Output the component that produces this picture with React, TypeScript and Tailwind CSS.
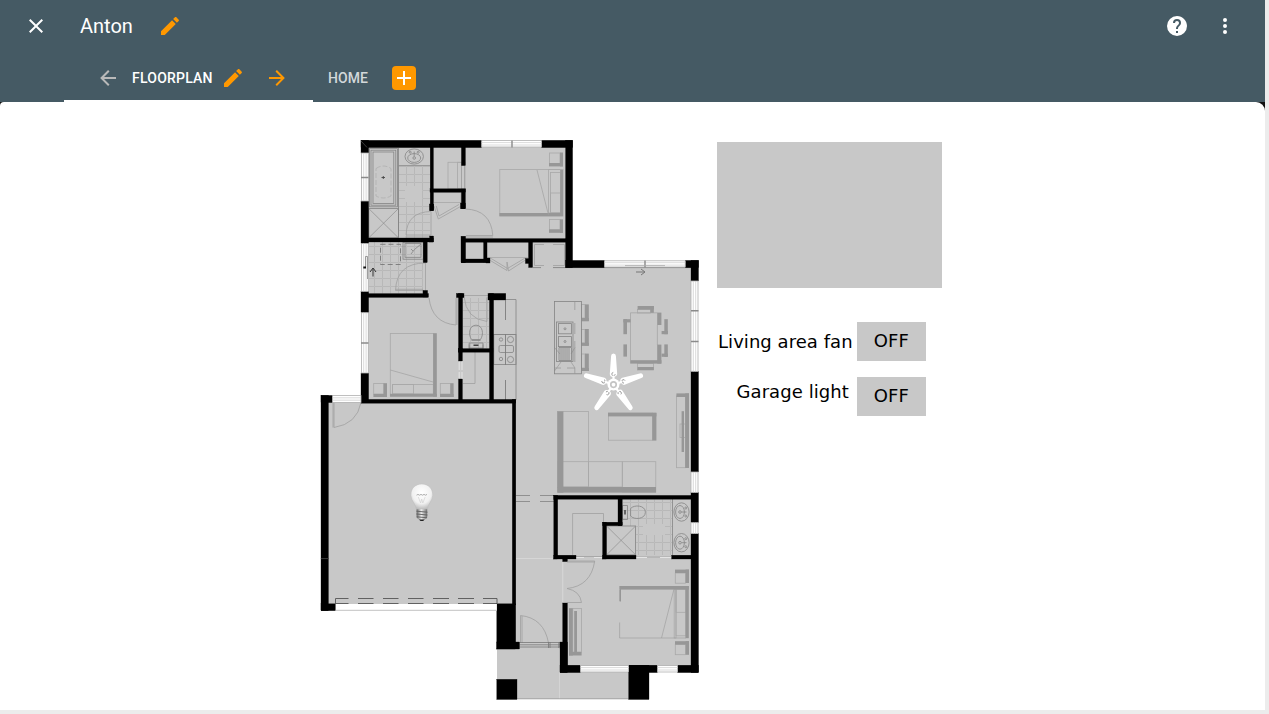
import React from "react";

const ICONS = {
  close: "M19,6.41L17.59,5L12,10.59L6.41,5L5,6.41L10.59,12L5,17.59L6.41,19L12,13.41L17.59,19L19,17.59L13.41,12L19,6.41Z",
  pencil:
    "M20.71,7.04C21.1,6.65 21.1,6 20.71,5.63L18.37,3.29C18,2.9 17.35,2.9 16.96,3.29L15.12,5.12L18.87,8.87M3,17.25V21H6.75L17.81,9.93L14.06,6.18L3,17.25Z",
  left: "M20,11V13H8L13.5,18.5L12.08,19.92L4.16,12L12.08,4.08L13.5,5.5L8,11H20Z",
  right: "M4,11V13H16L10.5,18.5L11.92,19.92L19.84,12L11.92,4.08L10.5,5.5L16,11H4Z",
  plus: "M19,13H13V19H11V13H5V11H11V5H13V11H19V13Z",
  help: "M15.07,11.25L14.17,12.17C13.45,12.89 13,13.5 13,15H11V14.5C11,13.39 11.45,12.39 12.17,11.67L13.41,10.41C13.78,10.05 14,9.55 14,9C14,7.89 13.1,7 12,7A2,2 0 0,0 10,9H8A4,4 0 0,1 12,5A4,4 0 0,1 16,9C16,9.88 15.64,10.67 15.07,11.25M13,19H11V17H13M12,2A10,10 0 0,0 2,12A10,10 0 0,0 12,22A10,10 0 0,0 22,12C22,6.47 17.5,2 12,2Z",
  dots: "M12,16A2,2 0 0,1 14,18A2,2 0 0,1 12,20A2,2 0 0,1 10,18A2,2 0 0,1 12,16M12,10A2,2 0 0,1 14,12A2,2 0 0,1 12,14A2,2 0 0,1 10,12A2,2 0 0,1 12,10M12,4A2,2 0 0,1 14,6A2,2 0 0,1 12,8A2,2 0 0,1 10,6A2,2 0 0,1 12,4Z",
};

function Icon({ name, className = "" }: { name: keyof typeof ICONS; className?: string }) {
  return (
    <svg viewBox="0 0 24 24" className={`size-6 shrink-0 fill-current ${className}`}>
      <path d={ICONS[name]} />
    </svg>
  );
}

type Box = [number, number, number, number];

// Boxes are given as left, top, right, bottom.
const WALLS: Box[] = [
  [361, 140.3, 481.7, 147.6], [541.5, 140.3, 572.6, 147.6], [565.6, 140.3, 572.6, 267.7],
  [565.6, 260.4, 604.6, 267.7], [685.2, 260.4, 698.5, 267.7], [691, 260.4, 698.5, 281],
  [691, 371.3, 698.5, 472], [691, 492.4, 698.5, 522.7], [691, 533.5, 698.5, 672.6],
  [677.5, 665.2, 698.5, 672.6], [628.6, 665.2, 657.6, 672.6], [628.6, 665.2, 649, 699.5],
  [560, 665.2, 580.6, 672.6], [562.7, 603, 567.4, 672], [560, 642, 567.4, 672.6],
  [496.8, 603.8, 515.7, 649], [496.8, 642, 519.5, 649], [496.8, 679.3, 517, 699.5],
  [361, 140.3, 368.6, 153], [361, 201, 368.6, 243.6], [361, 291.3, 368.6, 312.7],
  [361, 373, 368.6, 402.6], [321, 395.4, 328.4, 610.7], [321, 395.4, 332.6, 402.6],
  [321, 603.8, 335.7, 610.7], [512.3, 399.4, 515.8, 605], [361, 399.4, 515.8, 403.2],
  [430.2, 147, 433.4, 210.7], [429.4, 204, 433.8, 210.7], [430, 188.8, 465.4, 192.2],
  [461.4, 147, 465.4, 165.6], [461.4, 189, 465.4, 208.8], [460.4, 203, 465.4, 208.8],
  [368, 238, 433.3, 242], [429.6, 236, 433.6, 242], [461.4, 238.6, 566, 242.2],
  [461, 236.2, 465.6, 262.8], [461.4, 259, 489.6, 262.8], [483.6, 242, 487, 262],
  [486, 258, 490, 263], [528.6, 242, 532.6, 267.5], [525.4, 258.5, 530, 263.5],
  [423.2, 241, 427.2, 262.6], [368, 293.6, 428.5, 297.4], [423, 290.4, 427.6, 297],
  [458.5, 293.4, 462.6, 352], [456.4, 293.4, 464, 297.6], [458.5, 348.6, 493, 352.2],
  [458.5, 348.6, 462.4, 361], [489.5, 293.4, 493.6, 401], [488, 293.4, 505.8, 300],
  [458.5, 379, 462.4, 401],
  [553.8, 495.4, 691, 499.2], [553.8, 495.4, 557.7, 559], [553.8, 555.2, 576, 559],
  [562.7, 559, 567.4, 561.6], [618, 499, 622.2, 525.7], [602.6, 522.2, 622.2, 525.7],
  [602.6, 522.2, 606.4, 559], [602.6, 555.2, 636, 559], [671.7, 555.2, 691, 559],
];

const WINDOWS: Box[] = [
  [481.7, 140.6, 541.5, 147], [604.6, 260.8, 685.2, 267], [691, 281, 698, 371.3],
  [691, 472, 698, 492.4], [691, 522.7, 698, 533.5], [657.6, 665.6, 677.5, 672],
  [580.6, 665.6, 628.6, 672], [361.5, 153, 368.3, 201], [361.5, 243.6, 368.3, 291.3],
  [361.5, 312.7, 368.3, 373], [332.6, 395.6, 361, 402.4],
];

// Darker shadow edges of the furniture.
const SHADES: Box[] = [
  [549, 163, 563, 166.4], [560, 152.5, 563, 166.4], [499.4, 213, 563, 216.2], [560.2, 170, 563, 216],
  [549, 229.4, 563, 232.8], [560, 219.3, 563, 232.8],
  [433.2, 333.2, 436.8, 396.7], [390, 393.8, 436.8, 396.7], [373.4, 394, 387, 397], [383.6, 383.2, 387, 397],
  [440, 394, 453.6, 397], [450.4, 383.2, 453.6, 397],
  [585, 304.4, 588.8, 321], [581.6, 318, 588.8, 321.3], [585, 329, 588.8, 345.6], [581.6, 342.8, 588.8, 345.9],
  [585, 353.6, 588.8, 371], [581.6, 368, 588.8, 371],
  [637.6, 306, 653.8, 309.6], [650.4, 306, 653.8, 312.8], [657.2, 312.6, 661.4, 325], [630.2, 360.2, 661.4, 363.6],
  [657.2, 344.6, 661.4, 363.6], [623.4, 319.2, 630.6, 322.4], [623.4, 319.2, 627, 334.2],
  [664.3, 319.2, 667.8, 334.2], [661.6, 331, 667.8, 334.2], [623.4, 344.4, 627, 356.6],
  [664.3, 344.4, 667.8, 356.8], [661.6, 353.6, 667.8, 356.8], [637.6, 367, 653.8, 370],
  [557.4, 411.4, 563.4, 492.6], [557.4, 487, 656, 492.6], [608, 412.8, 656.4, 416.4], [652.3, 412.8, 656.4, 440.6],
  [676.4, 393.4, 689, 397], [685.2, 393.4, 689, 468], [681.6, 411.2, 684, 452],
  [619.6, 586, 688.8, 589.6], [685.4, 586, 688.8, 638.2], [619.6, 586, 621, 601.5],
  [675, 569.6, 689, 573], [685.6, 569.6, 689, 583], [675, 641.2, 689, 644.6], [685.6, 641.2, 689, 654.8],
  [569, 608.2, 572.8, 655.5], [569, 652, 581.6, 655.5], [574.2, 611, 577, 652],
];

const OUTLINES: Box[] = [
  [549.5, 153, 560, 163.5], [499.8, 169.5, 563, 216], [548.5, 169.5, 561, 213], [550.5, 172.5, 560.5, 213],
  [550.5, 193, 560.5, 213], [549.5, 219.5, 560, 229.8], [390.3, 333.5, 433.5, 396], [392.5, 384.5, 433.3, 394],
  [392.5, 384.5, 413.5, 394], [373.7, 383.5, 383.8, 394], [440.3, 383.5, 450.5, 394],
  [581.6, 304.5, 585, 318], [581.6, 329.5, 585, 343], [581.6, 354, 585, 368],
  [637.6, 309.4, 650.5, 313], [637.6, 363.5, 653.5, 370],
  [557.6, 411.5, 588.6, 487], [557.6, 461.7, 588.6, 487], [588.6, 461.7, 622.3, 487], [622.3, 461.7, 655.8, 492],
  [608.4, 413, 652.4, 440.2], [676.5, 396, 685.5, 467.7], [680, 424, 685.5, 437.5],
  [675.3, 573, 685.6, 583.2], [675.3, 644.5, 685.6, 654.7], [676, 589, 686, 635.8], [674.2, 589, 676, 638],
  [676, 589, 686, 612.3], [572.8, 608.6, 581.5, 652],
  [448, 162.3, 465, 189], [457.5, 162.3, 461.5, 188.5], [433.5, 192.5, 461, 202.5], [487, 242.5, 528.5, 257.5],
];

const FINE_BOXES: Box[] = [
  [369.5, 148.6, 397.4, 206.8], [371, 150.2, 395.8, 205.2], [373, 152, 393.8, 203.4],
  [368.8, 208.6, 398.4, 237.8], [403, 242.3, 423.5, 259.2], [405, 243.6, 421, 257.3],
  [606.6, 526, 635.6, 554.8], [554.4, 301.5, 581.4, 373.8],
  [556.4, 322, 573, 361.5], [558.4, 323.6, 571.5, 333.8], [558.4, 336.6, 571.5, 346.6],
  [493.8, 334.5, 516, 364.5],
];

function rects(boxes: Box[]) {
  return boxes.map(([l, t, r, b], i) => <rect key={i} x={l} y={t} width={r - l} height={b - t} />);
}

function Basin({ x, y, turn = 0 }: { x: number; y: number; turn?: number }) {
  return (
    <g transform={`translate(${x} ${y}) rotate(${turn})`}>
      <ellipse rx="9.2" ry="7.6" />
      <ellipse rx="6.5" ry="4.4" cy="1.5" />
      <circle r="1.3" cy="1.5" />
      <circle r="1" cx="-4" cy="-4.3" />
      <circle r="1" cx="4" cy="-4.3" />
      <path d="M0-5V0" />
    </g>
  );
}

function Window({ box }: { box: Box }) {
  const [l, t, r, b] = box;
  const flat = r - l > b - t;
  const cx = (l + r) / 2;
  const cy = (t + b) / 2;
  return (
    <g>
      <rect x={l} y={t} width={r - l} height={b - t} fill="#fff" stroke="#b0b0b0" strokeWidth=".8" />
      <path
        d={flat ? `M${l} ${cy - 1.2}H${r}M${l} ${cy + 1.2}H${r}` : `M${cx - 1.2} ${t}V${b}M${cx + 1.2} ${t}V${b}`}
        stroke="#d0d0d0"
        strokeWidth=".8"
      />
    </g>
  );
}

function Fan() {
  return (
    <g transform="translate(613.5 384.6)">
      {[0, 72, 144, 216, 288].map((a) => (
        <g key={a} transform={`rotate(${a})`}>
          <path d="M-2.4-28.5Q-2.4-31 0-31T2.4-28.5L3.7-10.5Q3.5-8 0-7.6T-3.7-10.5Z" fill="#fff" />
          <circle cy="-10.5" r="1.7" fill="none" stroke="#999" strokeWidth=".9" strokeDasharray="7 3" />
          <path d="M0-9V-4" stroke="#fff" strokeWidth="2.2" />
        </g>
      ))}
      <circle r="6" fill="#fff" />
      <circle r="2.7" fill="#fff" stroke="#c4c4c4" strokeWidth="1.7" />
    </g>
  );
}

function Bulb() {
  return (
    <g>
      <path
        d="M421.8 484C415 484 410.5 489 410.8 495.3C411.1 501.2 415.7 503.6 416.3 509.3H427.4C428 503.6 432.4 501.2 432.8 495.3C433 489 428.6 484 421.8 484Z"
        fill="url(#glass)"
        stroke="#bdbdbd"
        strokeWidth=".5"
      />
      <path d="M416.5 495.2l1.5-.8 1.5.8 1.5-.8 1.5.8 1.5-.8 1.5.8 1.5-.8" stroke="#a5a5a5" strokeWidth=".9" />
      <path d="M418.3 497l2.3 6 1.1-4 1.1 4 2.4-6" stroke="#d2d2d2" strokeWidth=".7" />
      <path d="M416.6 509.2H427.2V517.5L424 520.3Q421.8 521.8 419.6 520.3L416.6 517.5Z" fill="url(#cap)" />
      <path d="M416.4 511.2L427.5 512.2M416.4 514L427.5 515M416.8 516.8L427 517.8" stroke="#5d5d5d" strokeWidth=".9" />
      <path d="M419 519.5h5.6l-1.5 1.5h-2.6z" fill="#222" />
    </g>
  );
}

function FloorPlan() {
  return (
    <svg viewBox="320 139 380 562" className="h-[562px] w-[380px] shrink-0" fill="none">
      <defs>
        <radialGradient id="glass" cx=".5" cy=".35" r=".65">
          <stop offset="0" stopColor="#fff" />
          <stop offset=".65" stopColor="#f1f1f1" />
          <stop offset="1" stopColor="#bcbcbc" />
        </radialGradient>
        <linearGradient id="cap">
          <stop offset="0" stopColor="#656565" />
          <stop offset=".45" stopColor="#ededed" />
          <stop offset="1" stopColor="#707070" />
        </linearGradient>
        <pattern id="tiles" width="8" height="8" x="398" y="166" patternUnits="userSpaceOnUse">
          <path d="M8 .5H.5V8" stroke="#b7b7b7" strokeWidth=".9" />
        </pattern>
      </defs>
      <path
        d="M365 144H569V264H695V669H628.5V699H497V649H515V604H325V400H365Z"
        fill="#c8c8c8"
      />
      <path d="M398 166H430V238H398ZM368.6 242H423V293.5H368.6ZM463 298H489V348H463ZM622.4 499.4H672.5V555H636V526H622.4Z" fill="url(#tiles)" />
      <path d="M398.5 148H430V165.5H398.5ZM672.5 499.4H691V555H672.5ZM405 186H422V202H405ZM643 524H665V535H643Z" fill="#c8c8c8" />

      <g stroke="#a9a9a9" strokeWidth=".8">{rects(OUTLINES)}</g>
      <path d="M630.5 325V312.8H657.4M630.5 345V360.5M657.4 325V345M630.5 325V345" stroke="#a6a6a6" strokeWidth=".8" />
      <g fill="#979797">{rects(SHADES)}</g>

      <g stroke="#848484" strokeWidth=".8">
        {rects(FINE_BOXES)}
        <path d="M368.8 208.6L398.4 237.8M398.4 208.6L368.8 237.8M606.6 526L635.6 554.8M635.6 526L606.6 554.8" strokeWidth=".6" />
        <path d="M398.5 148V237M398.5 165.6H430M672.5 499V555M516 299.5V400M506 299.5H516M493.8 334.5H516" />
        <Basin x={414.2} y={156.5} />
        <Basin x={681.5} y={512} turn={90} />
        <Basin x={681.5} y={542.7} turn={90} />
        <circle cx="565" cy="328.8" r="1" />
        <circle cx="565" cy="341.5" r="1" />
        <path d="M559 347.5V360.5H571.5V347.5ZM561 348V360M563 348V360M565 348V360M567 348V360M569 348V360" />
        <path d="M554.5 347.5L560 354M554.5 371L561 362M575 347.5L571 354M575 368L571 362" strokeWidth=".5" />
        <circle cx="501" cy="339.5" r="1.7" />
        <circle cx="510.5" cy="339.5" r="3.1" />
        <circle cx="501" cy="359" r="1.7" />
        <circle cx="510.5" cy="359.5" r="3.1" />
        <rect x="499" y="345.5" width="14.5" height="7" rx="1.4" />
        <path d="M471.5 339.5C467.8 334 469.4 325.2 476 325.2S484.2 334 480.5 339.5ZM471.5 340.5H480.5M469.2 344.5V349M483 344.5V349M469.2 343H483V348H469.2Z" />
        <path d="M630.6 508.5C634 504.5 645.4 505 645.4 512.2S634 520 630.6 516ZM622.5 505.5H627.5V519.5H622.5Z" />
        <path d="M473.5 345.2H478.5M625 510V514.5" stroke="#444" strokeWidth="1.5" />
        <path d="M411 254L414.5 249.5L421 244M411 249l2 2" />
      </g>

      <g stroke="#a0a0a0" strokeWidth=".8">
        <path d="M376 168.5Q383.4 163.5 391 168.5V196Q383.4 200 376 196Z" strokeDasharray="5 2" strokeWidth=".5" />
        <path d="M537 170L548.5 215M390.3 370L433 382M674 589L661.5 638M619.6 622.5V638H686M619.6 601V590" strokeWidth=".7" />
        <path d="M431 211.5Q407 212 406 235H431V211.5M405.5 237H431" />
        <path d="M465.5 209Q491 210 492.8 235.5H466M465.5 237H493" />
        <path d="M434 206L438.3 219L460.5 206.5M436.3 206L439 216L459 204.5" />
        <path d="M489.5 260L507 270.5V262L508.5 271L525.5 260M490 257.8L507.5 268.5L525.5 257.8" />
        <path d="M425.5 263Q396.5 263 395.5 290.5H423M425.5 262.5V292M395.5 289.3H423" />
        <path d="M429 298Q432 323 456 325V298M457 298V325" />
        <path d="M464 296.5Q466 319 487 321.5V297M464 295.5H488" />
        <path d="M475 352V383.5H463M461.5 166V189M464.5 166V189" />
        <path d="M334 403V427.5Q357 424 361 402.5M333 403V427.5" />
        <path d="M572.6 555V513.5H603.5V555M576 556.5H602.6M636 557H671.7" />
        <path d="M567 561H594.7Q591 586 567 588.5Q580 591 581.5 602.5H567M567 562H594.7" />
        <path d="M520.5 643V615.5Q544 618 548.5 643M522 643V616" />
        <path d="M519.5 642.5H560V647H519.5M519.5 644.8H560M548.5 642V648M550 642V648M558.8 642V648" stroke="#777" />
        <path d="M516 495.5H530M540 495.5H554M516 501.5H530M540 501.5H554" stroke="#828282" />
        <path d="M534.5 244.5H544M553 244.5H564.5M534.5 244.5V265.5H544M553 265.5H564.5V244.5" />
        <path d="M532.6 267.6H541M553 267.6H691M320.8 558.5H328.5" stroke="#777" />
      </g>
      <path d="M459.2 361V370M462 361V370M459.2 372V379M462 372V379M576 557.5H584M594 557.5H602M636 557.5H647M660 557.5H671" stroke="#e4e4e4" strokeWidth="1" />

      <path d="M380.5 244.3H400.5V264.5H380.5Z" stroke="#777" strokeDasharray="5 3" strokeWidth=".9" />
      <path d="M383.3 176V179M381.5 177.5H385" stroke="#444" strokeWidth=".9" />
      <path d="M505.5 300V320M505.5 334V365M505.5 380V400" stroke="#7c7c7c" strokeWidth=".9" />
      <path d="M574.8 302V310M574.8 323V334M574.8 341V362M574.8 368V374M555 368H561M567 368H575" stroke="#999" strokeWidth=".8" />
      <path d="M373 276.5V268.5M370 272L373 268L376 272" stroke="#333" />
      <path d="M636 272H644.5M641 269L645 272L641 275" stroke="#777" />
      <path d="M515.8 558.5H554M559.4 649V699" stroke="#d9d9d9" strokeWidth=".8" />
      <path d="M562.8 562V603" stroke="#dcdcdc" strokeWidth=".8" />
      <path d="M517 698.8H628.5" stroke="#999" strokeWidth=".8" />

      <g fill="#000" stroke="#000" strokeWidth=".3">{rects(WALLS)}</g>
      <path d="M321 558.6H328M361 141L367 147.4" stroke="#777" strokeWidth=".5" />
      {WINDOWS.map((box, i) => (
        <Window key={i} box={box} />
      ))}
      <path d="M512 140.5V147.5M645 260.5V267.5M361 177.5H368.5M361 343H368.5M691 310.7H698.5M691 341.5H698.5" stroke="#8a8a8a" strokeWidth="1.4" />
      <path d="M625 265.6H645M645 265.6H665" stroke="#aaa" strokeWidth=".8" />
      <path d="M365.5 267.5V256.5H367.5V279" stroke="#777" strokeWidth=".7" />
      <path d="M363.3 267.5H366" stroke="#111" strokeWidth="2" />

      <path d="M335.7 604H496.8V610.5H335.7Z" fill="#fff" />
      <path d="M335.7 610.3H496.8" stroke="#c2c2c2" />
      <path d="M335.5 604V598.5H348.5M358 598.5H373.5M383 598.5H398.5M408 598.5H423.5M433 598.5H449M458 598.5H474M483 598.5H497V604M335.5 603.5H348.5M358 603.5H373.5M383 603.5H398.5M408 603.5H423.5M433 603.5H449M458 603.5H474M483 603.5H497" stroke="#555" strokeWidth=".9" />
      <Fan />
      <Bulb />
    </svg>
  );
}

function Toggle() {
  return (
    <button className="flex h-[39px] w-[68.5px] items-center justify-center bg-[#c8c8c8] pb-px text-[18px] leading-none tracking-[0.1px]">
      OFF
    </button>
  );
}

export default function App() {
  return (
    <div className="h-[714px] w-full overflow-hidden bg-[#ececec] font-['Roboto',sans-serif]">
      <div className="flex h-[710px] w-[1265px] flex-col bg-[#111]">
        <header className="h-[102px] shrink-0 bg-[#455a64] text-white">
          <div className="flex h-[52px] items-center pr-7 pl-6">
            <Icon name="close" />
            <h1 className="ml-8 w-[54px] pb-px text-xl leading-none font-normal">Anton</h1>
            <Icon name="pencil" className="ml-6 text-[#ff9800]" />
            <Icon name="help" className="ml-auto" />
            <Icon name="dots" className="ml-6" />
          </div>
          <nav className="flex h-[50px] pl-16 text-sm font-medium">
            <div className="flex w-[249px] items-center border-b-2 border-white pt-1 pl-8">
              <Icon name="left" className="text-[#b9b9b9]" />
              <span className="ml-3 w-[89px] tracking-[0.22px]">FLOORPLAN</span>
              <Icon name="pencil" className="text-[#ff9800]" />
              <Icon name="right" className="ml-5 text-[#ff9800]" />
            </div>
            <div className="flex items-center pt-0.5 pl-[15px]">
              <span className="w-16 tracking-[0.1px] text-[#d3d8da]">HOME</span>
              <button className="flex size-6 items-center justify-center rounded bg-[#ff9800]">
                <Icon name="plus" />
              </button>
            </div>
          </nav>
        </header>
        <main className="flex grow items-start rounded-tl-[4px] rounded-tr-[9px] bg-white pt-[37px] pl-[320px]">
          <FloorPlan />
          <section className="ml-[17px] flex w-[224.5px] flex-col pt-[3px] font-['DejaVu_Sans',sans-serif] text-[18px] leading-none text-black">
            <div className="h-[146px] bg-[#c8c8c8]" />
            <div className="mt-[34px] flex items-center">
              <span className="w-[140px] pl-px tracking-[0.05px] whitespace-nowrap">Living area fan</span>
              <Toggle />
            </div>
            <div className="mt-4 flex items-center">
              <span className="w-[140px] pb-2.5 pl-[19.5px] tracking-[0.08px] whitespace-nowrap">Garage light</span>
              <Toggle />
            </div>
          </section>
        </main>
      </div>
    </div>
  );
}
